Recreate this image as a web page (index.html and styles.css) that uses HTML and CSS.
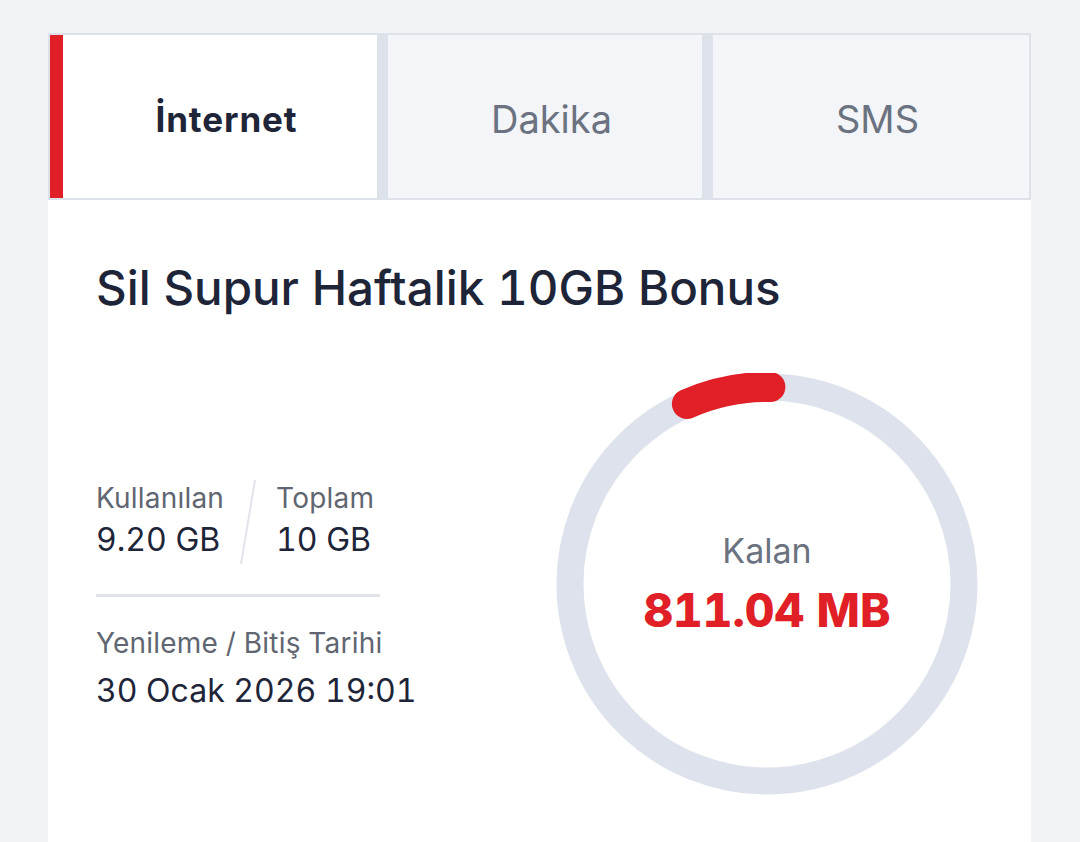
FILE: index.html
```html
<!DOCTYPE html>
<html lang="tr">
<head>
<meta charset="utf-8">
<link rel="stylesheet" href="styles.css">
</head>
<body>
<div class="page">
  <div class="tabs">
    <div class="tab active">İnternet</div>
    <div class="tab">Dakika</div>
    <div class="tab">SMS</div>
  </div>
  <div class="card">
    <h1 class="title">Sil Supur Haftalik 10GB Bonus</h1>
    <div class="content">
      <div class="info">
        <div class="stats">
          <div class="stat">
            <div class="label">Kullanılan</div>
            <div class="value">9.20 GB</div>
          </div>
          <div class="slash"></div>
          <div class="stat">
            <div class="label">Toplam</div>
            <div class="value">10 GB</div>
          </div>
        </div>
        <div class="divider"></div>
        <div class="label">Yenileme / Bitiş Tarihi</div>
        <div class="value date">30 Ocak 2026 19:01</div>
      </div>
      <div class="ring">
        <svg class="ring-svg" width="422" height="422" viewBox="0 0 422 422">
          <circle cx="211" cy="211" r="197" fill="none" stroke="#dde2ec" stroke-width="27"/>
          <path d="M130.9 31 A197 197 0 0 1 214.4 14.03" fill="none" stroke="#e01f26" stroke-width="30" stroke-linecap="round"/>
        </svg>
        <div class="ring-text">
          <div class="ring-label">Kalan</div>
          <div class="ring-value">811.04 MB</div>
        </div>
      </div>
    </div>
  </div>
</div>
</body>
</html>
```
FILE: styles.css
```css
html, body {
  margin: 0;
  padding: 0;
  background: #f2f3f5;
  font-family: "Inter", "Lato", sans-serif;
  font-variant-numeric: tabular-nums;
}

.page {
  width: 983px;
  margin-left: 48px;
  padding-top: 33px;
}

.tabs {
  display: grid;
  grid-template-columns: 327px 314px 1fr;
  column-gap: 11px;
  padding: 2px;
  height: 163px;
  background: #dde2ea;
}

.tab {
  display: flex;
  align-items: center;
  justify-content: center;
  padding: 4px 0 0 13px;
  background: #f3f5f9;
  color: #6b7280;
  font-size: 38px;
  font-weight: 400;
}

.tab.active {
  background: #ffffff;
  color: #1e2538;
  font-size: 35px;
  font-weight: 700;
  letter-spacing: 0.9px;
  border-left: 13px solid #e01f26;
}

.card {
  background: #ffffff;
  height: 642px;
  padding: 0 53px 0 48px;
}

.title {
  margin: 0;
  padding-top: 60px;
  font-size: 47.5px;
  font-weight: 500;
  line-height: 56px;
  color: #1e2538;
}

.content {
  display: flex;
  justify-content: space-between;
  align-items: flex-start;
  margin-top: 57px;
}

.info {
  margin-top: 107px;
  display: flex;
  flex-direction: column;
}

.stats {
  display: flex;
  align-items: stretch;
}

.stat {
  display: flex;
  flex-direction: column;
}

.slash {
  width: 2px;
  margin: 0 27px 0 23px;
  background: #e1e4ea;
  transform: skewX(-9.5deg);
}

.label {
  font-size: 28px;
  line-height: 36px;
  letter-spacing: 0.2px;
  color: #5f6671;
}

.value {
  font-size: 32px;
  line-height: 48px;
  color: #1e2538;
}

.divider {
  width: 284px;
  height: 3px;
  background: #e1e4ea;
  margin: 30px 0 28px;
}

.date {
  margin-top: 6px;
}

.ring {
  display: grid;
  width: 422px;
  height: 422px;
}

.ring-svg,
.ring-text {
  grid-area: 1 / 1;
}

.ring-text {
  display: flex;
  flex-direction: column;
  align-items: center;
  padding-top: 158px;
}

.ring-label {
  font-size: 34px;
  line-height: 40px;
  color: #6b7280;
}

.ring-value {
  margin-top: 9px;
  font-size: 46px;
  line-height: 60px;
  font-weight: 800;
  color: #e01f26;
}
```
